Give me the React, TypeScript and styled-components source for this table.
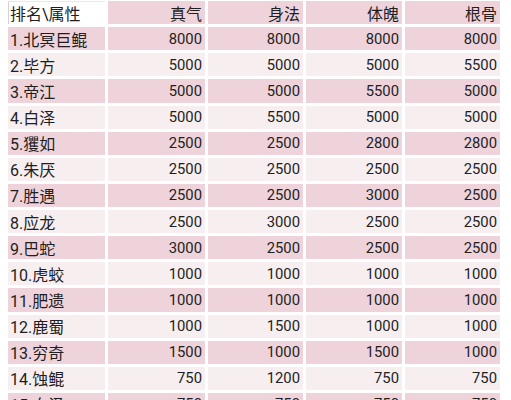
import React from 'react';
import styled, { createGlobalStyle } from 'styled-components';

const GlobalStyle = createGlobalStyle`
  html, body {
    margin: 0;
    padding: 0;
    background: #ffffff;
    overflow: hidden;
  }
  body {
    font-family: Roboto, "Noto Sans CJK SC", "Noto Sans", sans-serif;
  }
`;

const Page = styled.div`
  width: 511px;
  height: 400px;
  overflow: hidden;
  padding: 1px 0 0 8px;
  box-sizing: border-box;
`;

const Table = styled.div`
  display: grid;
  grid-template-columns: 97px 97px 95px 96px 95px;
  grid-auto-rows: 23.2px;
  column-gap: 3px;
  row-gap: 2.95px;
`;

const Cell = styled.div<{ $tone: 'dark' | 'light' | 'blank'; $first?: boolean; $num?: boolean }>`
  display: flex;
  align-items: center;
  justify-content: ${p => (p.$first ? 'flex-start' : 'flex-end')};
  padding: ${p => (p.$first ? '0 0 0 2px' : '0 3px 0 0')};
  font-size: ${p => (p.$num ? '14.8px' : '16px')};
  color: #221e1f;
  white-space: nowrap;
  background: ${p =>
    p.$tone === 'dark' ? '#efd3da' : p.$tone === 'light' ? '#f7eef0' : '#ffffff'};
  ${p =>
    p.$tone === 'blank'
      ? 'border-left: 1px solid #d6d2d3; border-top: 1px solid #ebe8e9; padding-left: 1px;'
      : ''}
`;

const header = ['排名\\属性', '真气', '身法', '体魄', '根骨'];

const rows: string[][] = [
  ['1.北冥巨鲲', '8000', '8000', '8000', '8000'],
  ['2.毕方', '5000', '5000', '5000', '5500'],
  ['3.帝江', '5000', '5000', '5500', '5000'],
  ['4.白泽', '5000', '5500', '5000', '5000'],
  ['5.玃如', '2500', '2500', '2800', '2800'],
  ['6.朱厌', '2500', '2500', '2500', '2500'],
  ['7.胜遇', '2500', '2500', '3000', '2500'],
  ['8.应龙', '2500', '3000', '2500', '2500'],
  ['9.巴蛇', '3000', '2500', '2500', '2500'],
  ['10.虎蛟', '1000', '1000', '1000', '1000'],
  ['11.肥遗', '1000', '1000', '1000', '1000'],
  ['12.鹿蜀', '1000', '1500', '1000', '1000'],
  ['13.穷奇', '1500', '1000', '1500', '1000'],
  ['14.蚀鲲', '750', '1200', '750', '750'],
  ['15.白泽', '750', '750', '750', '750'],
];

export default function App() {
  return (
    <>
      <GlobalStyle />
      <Page>
        <Table>
          {header.map((h, i) => (
            <Cell key={'h' + i} $tone={i === 0 ? 'blank' : 'dark'} $first={i === 0}>
              {h}
            </Cell>
          ))}
          {rows.map((row, r) =>
            row.map((v, c) => (
              <Cell
                key={r + '-' + c}
                $tone={r % 2 === 0 ? 'dark' : 'light'}
                $first={c === 0}
                $num={c !== 0}
              >
                {v}
              </Cell>
            ))
          )}
        </Table>
      </Page>
    </>
  );
}
